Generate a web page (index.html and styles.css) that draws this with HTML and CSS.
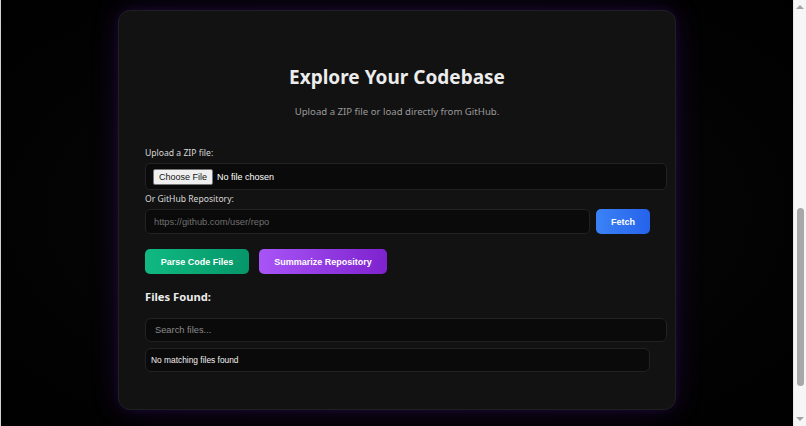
FILE: index.html
```html
<!DOCTYPE html>
<html lang="en">
<head>
<meta charset="utf-8">
<title>Explore Your Codebase</title>
<link rel="stylesheet" href="styles.css">
</head>
<body>
<div class="window">
  <main class="page">
    <section class="card">
      <h1 class="title">Explore Your Codebase</h1>
      <p class="subtitle">Upload a ZIP file or load directly from GitHub.</p>

      <label class="label" for="zip">Upload a ZIP file:</label>
      <div class="file-box">
        <input id="zip" class="file-input" type="file" accept=".zip">
      </div>

      <label class="label label-repo" for="repo">Or GitHub Repository:</label>
      <div class="repo-row">
        <input id="repo" class="text-input" type="text" placeholder="https://github.com/user/repo">
        <button class="btn btn-blue" type="button">Fetch</button>
      </div>

      <div class="actions">
        <button class="btn btn-green" type="button">Parse Code Files</button>
        <button class="btn btn-purple" type="button">Summarize Repository</button>
      </div>

      <h2 class="files-title">Files Found:</h2>
      <input class="search-input" type="text" placeholder="Search files...">
      <div class="file-list">No matching files found</div>
    </section>
  </main>
  <div class="scrollbar" aria-hidden="true">
    <span class="arrow arrow-up"></span>
    <div class="track"><span class="thumb"></span></div>
    <span class="arrow arrow-down"></span>
  </div>
</div>
</body>
</html>
```

FILE: styles.css
```css
html, body {
  margin: 0;
  padding: 0;
  height: 100%;
  overflow: hidden;
}
body {
  background: #000;
  font-family: "Noto Sans", "Open Sans", sans-serif;
  color: #e8e8e8;
}
.window {
  display: flex;
  height: 100%;
  border-left: 1px solid #cfcfcf;
  box-sizing: border-box;
}
.page {
  flex: 1;
  display: flex;
  justify-content: center;
  align-items: flex-start;
  padding-top: 10px;
  background: radial-gradient(ellipse at center, #09070d 0%, #040404 55%, #000 100%);
}
.card {
  box-sizing: border-box;
  width: 558px;
  height: 400px;
  background: #121212;
  border: 1px solid #1f1f22;
  border-radius: 12px;
  padding: 0 26px;
  box-shadow: 0 0 28px rgba(120, 40, 220, 0.2), 0 0 8px rgba(90, 30, 160, 0.16);
}
.title {
  margin: 53px 0 0;
  text-align: center;
  font-size: 19px;
  line-height: 26px;
  font-weight: 700;
  color: #ececec;
}
.subtitle {
  margin: 14px 0 0;
  text-align: center;
  font-size: 9.6px;
  line-height: 16px;
  color: #9a9a9a;
}
.label {
  display: block;
  margin-top: 26px;
  font-size: 8.6px;
  line-height: 14px;
  color: #d8d8d8;
}
.label-repo {
  margin-top: 2px;
}
.file-box {
  width: 522px;
  height: 27px;
  box-sizing: border-box;
  margin-top: 3px;
  padding: 0 7px;
  background: #0a0a0a;
  border: 1px solid #222;
  border-radius: 5px;
  display: flex;
  align-items: center;
}
.file-input {
  font-family: "Liberation Sans", Arial, sans-serif;
  font-size: 9px;
  color: #fff;
}
.file-input::file-selector-button {
  font-family: "Liberation Sans", Arial, sans-serif;
  font-size: 9px;
  color: #111;
  background: #efefef;
  border: 1px solid #767676;
  border-radius: 2px;
  padding: 2px 5px;
  margin-right: 4px;
}
.repo-row {
  display: flex;
  gap: 6px;
  margin-top: 3px;
  width: 505px;
}
.text-input,
.search-input {
  box-sizing: border-box;
  font-family: "Liberation Sans", Arial, sans-serif;
  font-size: 9.3px;
  color: #ddd;
  background: #0a0a0a;
  border: 1px solid #222;
  border-radius: 5px;
  outline: none;
}
.text-input {
  flex: 1;
  height: 25px;
  padding: 0 8px;
}
.text-input::placeholder {
  color: #6f6f6f;
}
.search-input::placeholder {
  color: #8a8a8a;
}
.btn {
  box-sizing: border-box;
  height: 25px;
  border: none;
  border-radius: 5px;
  font-family: "Liberation Sans", Arial, sans-serif;
  font-size: 9px;
  font-weight: 700;
  color: #fff;
  cursor: pointer;
  padding: 0;
}
.btn-blue {
  width: 54px;
  background: linear-gradient(90deg, #3b82f6, #2563eb);
}
.actions {
  display: flex;
  gap: 10px;
  margin-top: 15px;
}
.btn-green {
  width: 104px;
  background: linear-gradient(90deg, #10b981, #059669);
}
.btn-purple {
  width: 128px;
  background: linear-gradient(90deg, #a855f7, #7e22ce);
}
.files-title {
  margin: 13px 0 0;
  font-size: 11.2px;
  line-height: 20px;
  font-weight: 700;
  color: #ececec;
}
.search-input {
  display: block;
  width: 522px;
  height: 24px;
  margin-top: 11px;
  padding: 0 9px;
  border-radius: 6px;
}
.file-list {
  box-sizing: border-box;
  width: 505px;
  height: 24px;
  margin-top: 6px;
  padding: 0 5px;
  display: flex;
  align-items: center;
  background: #0a0a0a;
  border: 1px solid #222;
  border-radius: 6px;
  font-family: "Liberation Sans", Arial, sans-serif;
  font-size: 8.4px;
  color: #f0f0f0;
}
.scrollbar {
  width: 12px;
  flex: none;
  background: #f6f6f6;
  border-left: 1px solid #e6e6e6;
  display: flex;
  flex-direction: column;
  align-items: center;
}
.arrow {
  width: 0;
  height: 0;
  border-left: 4px solid transparent;
  border-right: 4px solid transparent;
  margin: 5px 0;
}
.arrow-up {
  border-bottom: 4px solid #a3a3a3;
}
.arrow-down {
  border-top: 4px solid #a3a3a3;
}
.track {
  flex: 1;
  width: 100%;
  display: flex;
  flex-direction: column;
  align-items: center;
  padding-top: 194px;
  box-sizing: border-box;
}
.thumb {
  width: 7px;
  height: 178px;
  border-radius: 4px;
  background: #a8a8a8;
}
```
